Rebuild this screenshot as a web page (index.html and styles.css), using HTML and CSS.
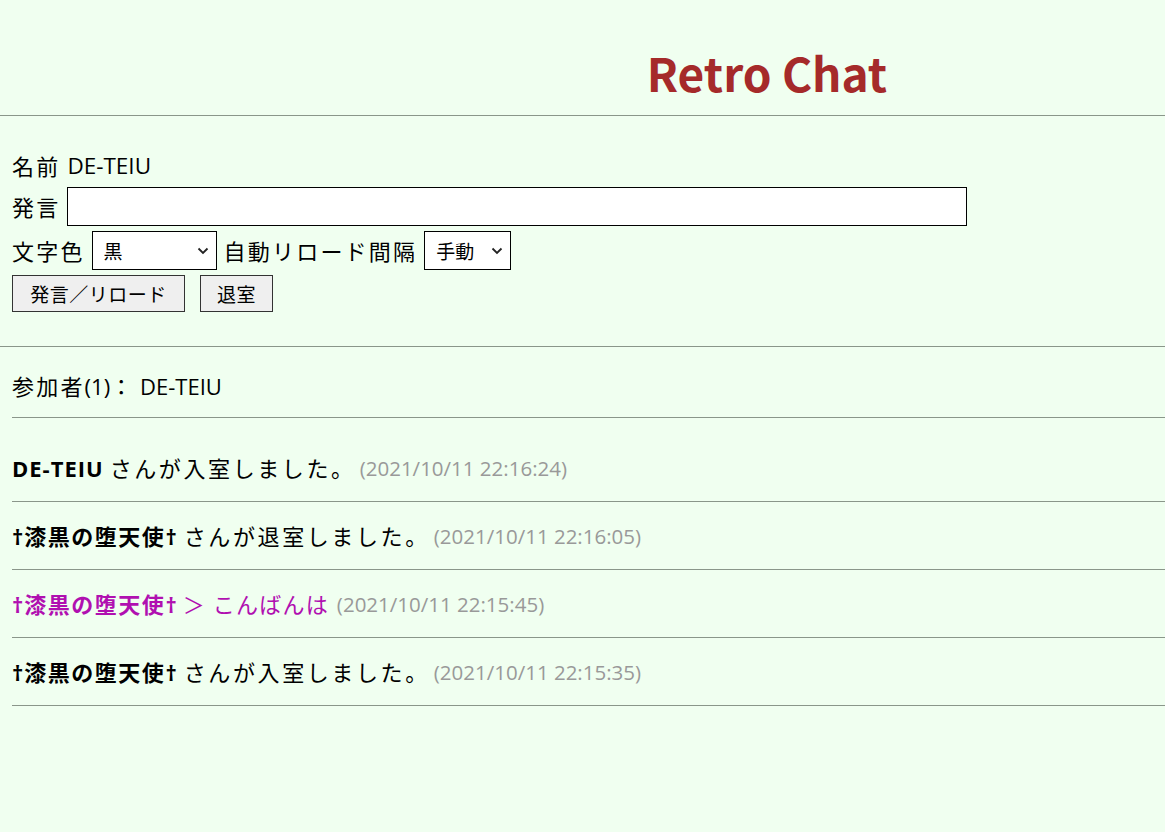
FILE: index.html
```html
<!DOCTYPE html>
<html lang="ja">
<head>
<meta charset="utf-8">
<title>Retro Chat</title>
<link rel="stylesheet" href="styles.css">
</head>
<body>
<header class="top">
  <h1 class="title">Retro Chat</h1>
</header>
<hr class="rule">
<form class="form">
  <div class="row row-name"><span class="label">名前</span><span class="name">DE-TEIU</span></div>
  <div class="row"><span class="label">発言</span><input class="say" type="text"></div>
  <div class="row">
    <span class="label">文字色</span>
    <span class="selwrap">
      <select class="sel sel-color"><option>黒</option></select>
      <svg class="chev" width="12" height="8" viewBox="0 0 12 8"><path d="M1.5 1.5 L6 6 L10.5 1.5" fill="none" stroke="#222" stroke-width="1.8"/></svg>
    </span>
    <span class="label">自動リロード間隔</span>
    <span class="selwrap">
      <select class="sel sel-reload"><option>手動</option></select>
      <svg class="chev" width="12" height="8" viewBox="0 0 12 8"><path d="M1.5 1.5 L6 6 L10.5 1.5" fill="none" stroke="#222" stroke-width="1.8"/></svg>
    </span>
  </div>
  <div class="row row-btn">
    <button type="button" class="btn btn-say">発言／リロード</button>
    <button type="button" class="btn btn-exit">退室</button>
  </div>
</form>
<hr class="rule">
<div class="members"><span class="label">参加者</span>(1)<span class="label">：</span> DE-TEIU</div>
<ul class="log">
  <li class="msg"><b class="who">DE-TEIU</b><span class="text">さんが入室しました。</span><span class="time">(2021/10/11 22:16:24)</span></li>
  <li class="msg"><b class="who">†<span class="jp">漆黒の堕天使</span>†</b><span class="text">さんが退室しました。</span><span class="time">(2021/10/11 22:16:05)</span></li>
  <li class="msg purple"><b class="who">†<span class="jp">漆黒の堕天使</span>†</b><span class="text say-text">＞ こんばんは</span><span class="time">(2021/10/11 22:15:45)</span></li>
  <li class="msg"><b class="who">†<span class="jp">漆黒の堕天使</span>†</b><span class="text">さんが入室しました。</span><span class="time">(2021/10/11 22:15:35)</span></li>
</ul>
</body>
</html>
```

FILE: styles.css
```css
html, body {
  margin: 0;
  padding: 0;
  background: #f0fff0;
  color: #000;
  font-family: "Open Sans", "Noto Sans CJK JP", sans-serif;
  font-size: 22px;
}
.top {
  padding: 49px 0 0 369px;
  height: 115px;
  box-sizing: border-box;
  text-align: center;
}
.title {
  margin: 0;
  font-family: "Noto Sans CJK JP", sans-serif;
  font-size: 46px;
  line-height: 1;
  font-weight: 700;
  color: #a52a2a;
}
.rule {
  margin: 0;
  border: 0;
  border-top: 1px solid #8a968a;
  height: 0;
}
.form {
  padding: 34px 12px 34px;
  display: flex;
  flex-direction: column;
  gap: 5px;
}
.row {
  display: flex;
  align-items: center;
  gap: 7px;
  height: 39px;
}
.row-name { height: 32px; gap: 7px; }
.row-btn { height: 37px; gap: 15px; }
.label { letter-spacing: 2.2px; line-height: 1; }
.name { line-height: 1; font-size: 22.5px; }
.say {
  width: 900px;
  height: 39px;
  box-sizing: border-box;
  border: 1px solid #000;
  background: #fff;
  margin: 0;
  padding: 0 6px;
  font: inherit;
}
.selwrap {
  position: relative;
  display: flex;
}
.sel {
  -webkit-appearance: none;
  appearance: none;
  height: 39px;
  box-sizing: border-box;
  border: 1px solid #000;
  border-radius: 0;
  background: #fff;
  color: #000;
  margin: 0;
  font-family: "Noto Sans CJK JP", sans-serif;
  font-size: 19px;
  padding: 0 4px 0 11px;
}
.chev {
  position: absolute;
  right: 8px;
  top: 16px;
  pointer-events: none;
}
.sel-color { width: 125px; }
.sel-reload { width: 87px; }
.btn {
  height: 37px;
  box-sizing: border-box;
  border: 1px solid #333;
  border-radius: 0;
  background: #efefef;
  color: #000;
  font-family: "Noto Sans CJK JP", sans-serif;
  font-size: 19px;
  letter-spacing: 0.5px;
  margin: 0;
  padding: 0;
}
.btn-say { width: 173px; }
.btn-exit { width: 73px; }
.members {
  margin-left: 12px;
  padding-top: 24px;
  height: 71px;
  box-sizing: border-box;
  line-height: 30px;
  border-bottom: 1px solid #8a968a;
}
.log {
  list-style: none;
  margin: 0 0 0 12px;
  padding: 0;
}
.msg {
  height: 68px;
  box-sizing: border-box;
  border-bottom: 1px solid #8a968a;
  display: flex;
  align-items: center;
  line-height: 30px;
}
.msg:first-child {
  height: 84px;
  padding-top: 16px;
}
.who { font-weight: 700; letter-spacing: 1px; }
.jp { letter-spacing: 1.5px; }
.text { letter-spacing: 2.6px; margin-left: 6px; }
.say-text { margin-left: 5px; letter-spacing: 1.2px; }
.time {
  color: #999;
  font-size: 20.5px;
  margin-left: 4px;
}
.say-text + .time { margin-left: 8px; }
.purple { color: #b010b0; }
```
